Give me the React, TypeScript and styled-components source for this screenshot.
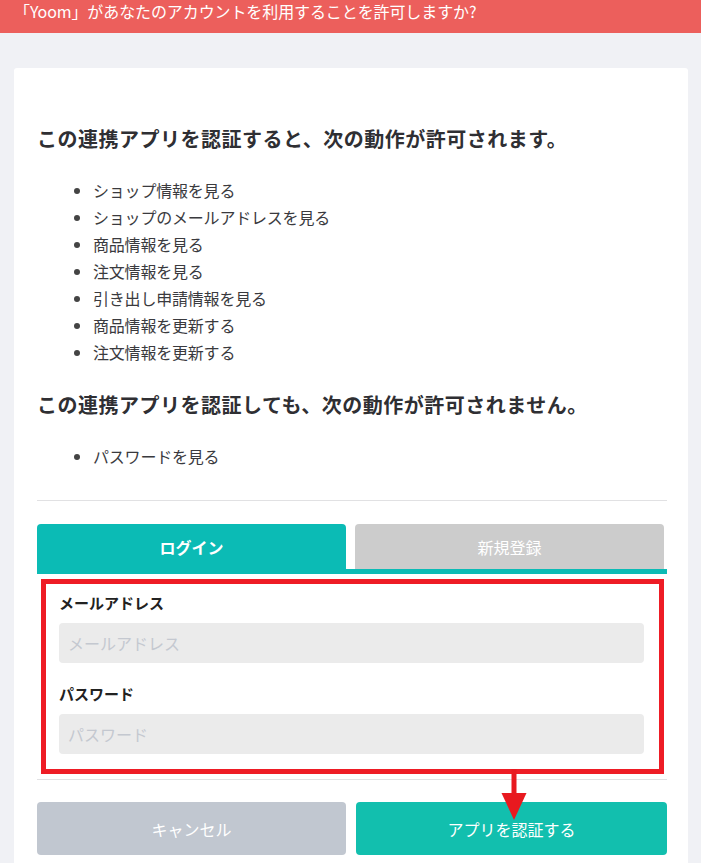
import React from "react";
import styled, { createGlobalStyle } from "styled-components";

const Global = createGlobalStyle`
  html, body { margin: 0; padding: 0; }
  body {
    background: #f0f1f5;
    font-family: "Noto Sans CJK JP", "Noto Sans", sans-serif;
    color: #333;
  }
  * { box-sizing: border-box; }
`;

const Header = styled.header`
  height: 33px;
  background: #ec5f5c;
  color: #fff;
  font-size: 16px;
  line-height: 22px;
  padding-left: 14px;
  letter-spacing: -0.1px;
`;

const Card = styled.main`
  margin: 35px 13px 0 14px;
  background: #fff;
  border-radius: 3px 3px 0 0;
  padding: 56px 21px 24px 23px;
`;

const Heading = styled.h2`
  margin: 0;
  font-size: 20px;
  line-height: 30px;
  font-weight: 700;
  letter-spacing: 0.5px;
  color: #2f2f33;
`;

const List = styled.ul<{ $bottom: number }>`
  margin: 22.5px 0 ${(p) => p.$bottom}px;
  padding-left: 56px;
  list-style: disc;
`;

const Item = styled.li`
  font-size: 16px;
  line-height: 27px;
  color: #3a3a3e;
  letter-spacing: -0.2px;
  &::marker { color: #444; }
`;

const Divider = styled.hr<{ $top?: number; $bottom: number }>`
  margin: ${(p) => p.$top ?? 0}px 0 ${(p) => p.$bottom}px;
  border: none;
  height: 1px;
  background: #e1e1e3;
`;

const TabRow = styled.div`
  display: flex;
  gap: 9px;
  padding-right: 3px;
  border-bottom: 5px solid #0bbbb5;
`;

const Tab = styled.div<{ $active?: boolean }>`
  flex: 1;
  height: 45px;
  border-radius: 4px 4px 0 0;
  background: ${(p) => (p.$active ? "#0bbbb5" : "#cccccc")};
  color: #fff;
  font-size: 16px;
  font-weight: ${(p) => (p.$active ? 700 : 400)};
  display: flex;
  align-items: center;
  justify-content: center;
`;

const Highlight = styled.section`
  position: relative;
  margin: 5px 3px 0 4px;
  border: 5px solid #ee1c25;
  padding: 9px 15px 15px 13px;
  display: flex;
  flex-direction: column;
  gap: 21px;
`;

const Field = styled.div`
  display: flex;
  flex-direction: column;
`;

const Label = styled.label`
  font-size: 15px;
  line-height: 20px;
  font-weight: 700;
  color: #222;
  margin-bottom: 10px;
`;

const Input = styled.input`
  height: 40px;
  width: 100%;
  border: none;
  border-radius: 4px;
  background: #ebebeb;
  padding: 0 9px;
  font-family: inherit;
  font-size: 16px;
  color: #333;
  outline: none;
  &::placeholder { color: #c4c8d0; }
`;

const Arrow = styled.svg`
  position: absolute;
  top: 100%;
  left: 455px;
`;

const Actions = styled.div`
  display: flex;
  gap: 10px;
`;

const Button = styled.button<{ $primary?: boolean }>`
  height: 53px;
  flex: ${(p) => (p.$primary ? "0 0 311px" : "0 0 309px")};
  border: none;
  border-radius: 4px;
  background: ${(p) => (p.$primary ? "#12bfae" : "#c1c7d0")};
  color: #fff;
  font-family: inherit;
  font-size: 16px;
  cursor: pointer;
`;

const allowed = [
  "ショップ情報を見る",
  "ショップのメールアドレスを見る",
  "商品情報を見る",
  "注文情報を見る",
  "引き出し申請情報を見る",
  "商品情報を更新する",
  "注文情報を更新する",
];

export default function App() {
  return (
    <>
      <Global />
      <Header>「Yoom」があなたのアカウントを利用することを許可しますか?</Header>
      <Card>
        <Heading>この連携アプリを認証すると、次の動作が許可されます。</Heading>
        <List $bottom={24.5}>
          {allowed.map((t) => (
            <Item key={t}>{t}</Item>
          ))}
        </List>
        <Heading>この連携アプリを認証しても、次の動作が許可されません。</Heading>
        <List $bottom={30.5}>
          <Item>パスワードを見る</Item>
        </List>
        <Divider $bottom={23} />
        <TabRow>
          <Tab $active>ログイン</Tab>
          <Tab>新規登録</Tab>
        </TabRow>
        <Highlight>
          <Field>
            <Label>メールアドレス</Label>
            <Input placeholder="メールアドレス" />
          </Field>
          <Field>
            <Label>パスワード</Label>
            <Input type="password" placeholder="パスワード" />
          </Field>
          <Arrow width="26" height="52" viewBox="0 0 26 52">
            <rect x="10.5" y="0" width="5" height="28" fill="#e8191f" />
            <polygon points="0.5,24 25.5,24 13,51" fill="#e8191f" />
          </Arrow>
        </Highlight>
        <Divider $top={5} $bottom={22} />
        <Actions>
          <Button>キャンセル</Button>
          <Button $primary>アプリを認証する</Button>
        </Actions>
      </Card>
    </>
  );
}
